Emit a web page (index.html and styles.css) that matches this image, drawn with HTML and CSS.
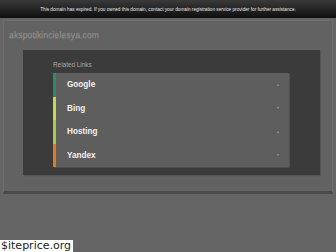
FILE: index.html
```html
<!DOCTYPE html>
<html>
<head>
<meta charset="utf-8">
<link rel="stylesheet" href="styles.css">
</head>
<body>
<div class="topbar">This domain has expired. If you owned this domain, contact your domain registration service provider for further assistance.</div>
<div class="frame">
  <div class="domain">akspotikincielesya.com</div>
  <div class="panel">
    <div class="title">Related Links</div>
    <ul class="links">
      <li class="item c1"><span>Google</span><i class="arr"></i></li>
      <li class="item c2"><span>Bing</span><i class="arr"></i></li>
      <li class="item c3"><span>Hosting</span><i class="arr"></i></li>
      <li class="item c4"><span>Yandex</span><i class="arr"></i></li>
    </ul>
  </div>
</div>
<div class="wm">$iteprice.org</div>
</body>
</html>
```
FILE: styles.css
```css
html, body { margin: 0; padding: 0; }
body {
  width: 336px; height: 252px; overflow: hidden;
  background: #656565;
  font-family: "Liberation Sans", Arial, sans-serif;
  position: relative;
}
.topbar {
  height: 18px;
  background: linear-gradient(#3a3a3a, #0e0e0e);
  color: #e8e8e8;
  font-size: 4.7px;
  line-height: 19px;
  text-align: center;
}
.frame {
  margin: 2px 3px 0 3px;
  height: 170px;
  border: 1px solid #6d6d6d;
  border-bottom: 3px solid #4a4a4a;
  background: #626262;
}
.domain {
  padding: 9px 0 0 5px;
  height: 21px;
  box-sizing: border-box;
  font-size: 8.6px;
  color: #8e8e8e;
  text-shadow: 0 1px 0 #767676;
  letter-spacing: 0.1px;
}
.panel {
  margin: 8px 12px 0 19px;
  height: 125px;
  background: #3b3b3b;
  box-shadow: 1px 1px 1px #555;
  padding: 10px 0 0 30px;
  box-sizing: border-box;
}
.title {
  font-size: 6.4px;
  color: #a8a8a8;
  height: 13px;
  line-height: 10px;
}
.links {
  list-style: none; margin: 0; padding: 0;
  width: 236px;
  background: #5e5e5e;
  box-shadow: 1px 1px 0 #505050;
}
.item {
  height: 23.5px;
  display: flex; align-items: center; justify-content: space-between;
  padding: 0 10px 0 11px;
  border-left: 3px solid;
  color: #f2f2f2;
  font-weight: bold;
  font-size: 8.2px;
}
.c1 { border-color: #2c8a6e; }
.c2 { border-color: #c9d64a; }
.c3 { border-color: #a6c94b; }
.c4 { border-color: #e07a22; }
.arr {
  width: 0; height: 0;
  border-left: 1.5px solid transparent;
  border-right: 1.5px solid transparent;
  border-bottom: 2px solid #9a9a9a;
}
.c2 .arr, .c4 .arr { border-bottom: none; border-top: 2px solid #9a9a9a; }
.wm {
  position: absolute; left: 0; bottom: 0;
  background: #fff; color: #222;
  font-family: "DejaVu Sans", sans-serif;
  font-size: 11px;
  line-height: 12px;
  padding: 0 2px 0 1px;
}
```
